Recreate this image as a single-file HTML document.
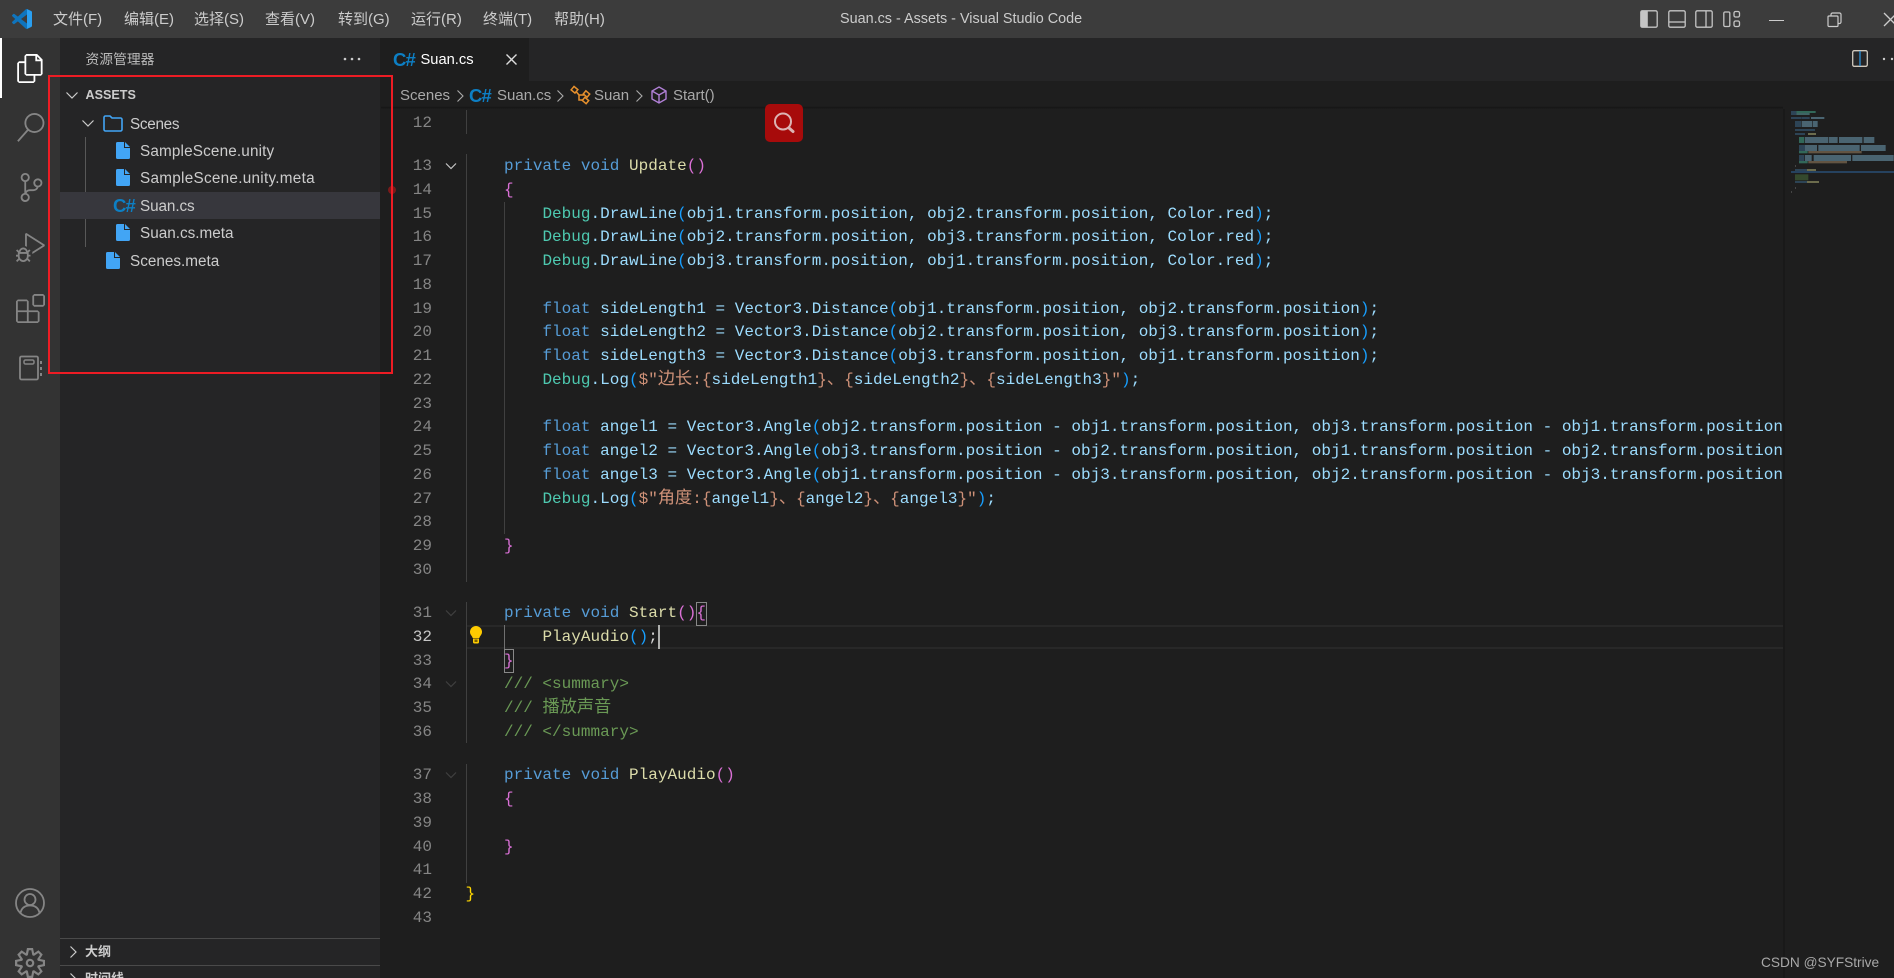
<!DOCTYPE html>
<html lang="zh-CN"><head><meta charset="utf-8"><title>Suan.cs - Assets - Visual Studio Code</title>
<style>
html,body{margin:0;padding:0;width:1894px;height:978px;overflow:hidden;background:#1e1e1e}
body{position:relative;font-family:"Liberation Sans","Noto Sans CJK SC",sans-serif;color:#ccc}
.a{position:absolute;white-space:pre}
svg{position:absolute;display:block;overflow:visible}
#code{position:absolute;left:0;top:0;width:1783px;height:978px;overflow:hidden;font-family:"Liberation Mono","Noto Sans CJK SC",monospace;font-size:16px;letter-spacing:.015px}
.l{position:absolute;left:465.5px;height:24px;line-height:24px;white-space:pre;color:#9cdcfe}
.n{position:absolute;left:390px;width:42px;height:24px;line-height:24px;text-align:right;color:#858585}
.c{font-size:17.2px;letter-spacing:0}
.k{color:#569cd6}.g{color:#4ec9b0}.f{color:#dcdcaa}.o{color:#ffd700}.p{color:#da70d6}.b{color:#179fff}.s{color:#ce9178}.m{color:#6a9955}.d{color:#d4d4d4}
.gd{position:absolute;width:1px;background:#404040}
.m1{top:9px;height:22px;line-height:22px;font-size:15px}
.t{font-size:15.3px;color:#ccc;height:24px;line-height:24px}
.cs{font-weight:bold;color:#0d7fc4;font-size:18.5px;line-height:24px;height:24px;letter-spacing:-.8px}
.bc{font-size:15px;color:#a9a9a9;top:84px;height:24px;line-height:24px}
</style></head><body>

<div class="a" style="left:0;top:0;width:1894px;height:38px;background:#3c3c3c"></div>
<div class="a" style="left:381px;top:38px;width:1513px;height:43px;background:#252526"></div>
<div class="a" style="left:381px;top:38px;width:148px;height:43px;background:#1e1e1e"></div>
<div class="a" style="left:381px;top:106px;width:1402px;height:3px;background:linear-gradient(#1e1e1e,#161616 60%,#1e1e1e)"></div>
<div class="a" style="left:1783px;top:109px;width:2px;height:869px;background:#191919"></div>

<div id="code">
<div class="a" style="left:466px;top:625px;width:1317px;height:2px;background:#282828"></div>
<div class="a" style="left:466px;top:647px;width:1317px;height:2px;background:#282828"></div>
<div class="gd" style="left:465.5px;top:110px;height:24px"></div>
<div class="gd" style="left:465.5px;top:154px;height:428px"></div>
<div class="gd" style="left:465.5px;top:602px;height:141px"></div>
<div class="gd" style="left:465.5px;top:764px;height:119px"></div>
<div class="gd" style="left:503.5px;top:202px;height:332px"></div>
<div class="gd" style="left:504px;top:625px;height:24px;background:#707070"></div>

<div class="n" style="top:111px">12</div>
<div class="n" style="top:154px">13</div>
<div class="n" style="top:178px">14</div>
<div class="n" style="top:201.5px">15</div>
<div class="n" style="top:225px">16</div>
<div class="n" style="top:249px">17</div>
<div class="n" style="top:273px">18</div>
<div class="n" style="top:296.5px">19</div>
<div class="n" style="top:320px">20</div>
<div class="n" style="top:344px">21</div>
<div class="n" style="top:368px">22</div>
<div class="n" style="top:392px">23</div>
<div class="n" style="top:415px">24</div>
<div class="n" style="top:439px">25</div>
<div class="n" style="top:463px">26</div>
<div class="n" style="top:487px">27</div>
<div class="n" style="top:510px">28</div>
<div class="n" style="top:534px">29</div>
<div class="n" style="top:558px">30</div>
<div class="n" style="top:601px">31</div>
<div class="n" style="top:625px;color:#c6c6c6">32</div>
<div class="n" style="top:649px">33</div>
<div class="n" style="top:672px">34</div>
<div class="n" style="top:696px">35</div>
<div class="n" style="top:720px">36</div>
<div class="n" style="top:763px">37</div>
<div class="n" style="top:787px">38</div>
<div class="n" style="top:811px">39</div>
<div class="n" style="top:835px">40</div>
<div class="n" style="top:858px">41</div>
<div class="n" style="top:882px">42</div>
<div class="n" style="top:906px">43</div>

<div class="l" style="top:154px">    <span class="k">private</span> <span class="k">void</span> <span class="f">Update</span><span class="p">()</span></div>
<div class="l" style="top:178px">    <span class="p">{</span></div>
<div class="l" style="top:201.5px">        <span class="g">Debug</span>.DrawLine<span class="b">(</span>obj1.transform.position, obj2.transform.position, Color.red<span class="b">)</span>;</div>
<div class="l" style="top:225px">        <span class="g">Debug</span>.DrawLine<span class="b">(</span>obj2.transform.position, obj3.transform.position, Color.red<span class="b">)</span>;</div>
<div class="l" style="top:249px">        <span class="g">Debug</span>.DrawLine<span class="b">(</span>obj3.transform.position, obj1.transform.position, Color.red<span class="b">)</span>;</div>
<div class="l" style="top:296.5px">        <span class="k">float</span> sideLength1 = Vector3.Distance<span class="b">(</span>obj1.transform.position, obj2.transform.position<span class="b">)</span>;</div>
<div class="l" style="top:320px">        <span class="k">float</span> sideLength2 = Vector3.Distance<span class="b">(</span>obj2.transform.position, obj3.transform.position<span class="b">)</span>;</div>
<div class="l" style="top:344px">        <span class="k">float</span> sideLength3 = Vector3.Distance<span class="b">(</span>obj3.transform.position, obj1.transform.position<span class="b">)</span>;</div>
<div class="l" style="top:368px">        <span class="g">Debug</span>.Log<span class="b">(</span><span class="s">$"<span class="c">边长</span>:{</span>sideLength1<span class="s">}<span class="c">、</span>{</span>sideLength2<span class="s">}<span class="c">、</span>{</span>sideLength3<span class="s">}"</span><span class="b">)</span>;</div>
<div class="l" style="top:415px">        <span class="k">float</span> angel1 = Vector3.Angle<span class="b">(</span>obj2.transform.position - obj1.transform.position, obj3.transform.position - obj1.transform.position<span class="b">)</span>;</div>
<div class="l" style="top:439px">        <span class="k">float</span> angel2 = Vector3.Angle<span class="b">(</span>obj3.transform.position - obj2.transform.position, obj1.transform.position - obj2.transform.position<span class="b">)</span>;</div>
<div class="l" style="top:463px">        <span class="k">float</span> angel3 = Vector3.Angle<span class="b">(</span>obj1.transform.position - obj3.transform.position, obj2.transform.position - obj3.transform.position<span class="b">)</span>;</div>
<div class="l" style="top:487px">        <span class="g">Debug</span>.Log<span class="b">(</span><span class="s">$"<span class="c">角度</span>:{</span>angel1<span class="s">}<span class="c">、</span>{</span>angel2<span class="s">}<span class="c">、</span>{</span>angel3<span class="s">}"</span><span class="b">)</span>;</div>
<div class="l" style="top:534px">    <span class="p">}</span></div>
<div class="l" style="top:601px">    <span class="k">private</span> <span class="k">void</span> <span class="f">Start</span><span class="p">(){</span></div>
<div class="l" style="top:625px">        <span class="f">PlayAudio</span><span class="b">()</span><span class="d">;</span></div>
<div class="l" style="top:649px">    <span class="p">}</span></div>
<div class="l m" style="top:672px;color:#6a9955">    /// &lt;summary&gt;</div>
<div class="l m" style="top:696px;color:#6a9955">    /// <span class="c">播放声音</span></div>
<div class="l m" style="top:720px;color:#6a9955">    /// &lt;/summary&gt;</div>
<div class="l" style="top:763px">    <span class="k">private</span> <span class="k">void</span> <span class="f">PlayAudio</span><span class="p">()</span></div>
<div class="l" style="top:787px">    <span class="p">{</span></div>
<div class="l" style="top:835px">    <span class="p">}</span></div>
<div class="l" style="top:882px"><span class="o">}</span></div>

<div class="a" style="left:696px;top:602px;width:9px;height:22px;border:1px solid #888"></div>
<div class="a" style="left:504px;top:649px;width:8px;height:22px;border:1px solid #888"></div>
<div class="a" style="left:658px;top:625px;width:2px;height:24px;background:#aeafad"></div>

<svg style="left:445px;top:160px" width="12" height="12" viewBox="0 0 12 12"><path d="M1 3.500l5 5 5-5" fill="none" stroke="#c5c5c5" stroke-width="1.200"/></svg>
<svg style="left:445px;top:607px" width="12" height="12" viewBox="0 0 12 12"><path d="M1 3.500l5 5 5-5" fill="none" stroke="#404040" stroke-width="1.200"/></svg>
<svg style="left:445px;top:678px" width="12" height="12" viewBox="0 0 12 12"><path d="M1 3.500l5 5 5-5" fill="none" stroke="#404040" stroke-width="1.200"/></svg>
<svg style="left:445px;top:769px" width="12" height="12" viewBox="0 0 12 12"><path d="M1 3.500l5 5 5-5" fill="none" stroke="#404040" stroke-width="1.200"/></svg>

<svg style="left:469px;top:625px" width="14" height="19" viewBox="0 0 14 19"><path d="M7 1a6 6 0 0 0-6 6c0 2.500 1.600 3.600 2.500 5.200V13h7v-.8C11.400 10.600 13 9.500 13 7a6 6 0 0 0-6-6z" fill="#fc0"/><path d="M4 13.500h6v3.500a1.500 1.500 0 0 1-1.500 1.500h-3A1.500 1.500 0 0 1 4 17z" fill="#fc0"/><rect x="5.500" y="14.500" width="3" height="2.500" fill="#7a6200"/></svg>

<div class="a" style="left:388px;top:186px;width:8px;height:8px;border-radius:50%;background:#7a1a1a"></div>

<div class="a" style="left:765px;top:104px;width:38px;height:38px;border-radius:5px;background:#a70b0b"></div>
<svg style="left:765px;top:104px" width="38" height="38" viewBox="0 0 38 38"><circle cx="18" cy="17.500" r="8" fill="none" stroke="#dcb4b4" stroke-width="2"/><path d="M24 24l4 3.500" stroke="#dcb4b4" stroke-width="3" stroke-linecap="round"/></svg>
</div>

<svg style="left:1783px;top:105px;opacity:.72" width="111" height="90" viewBox="0 0 333 270">
<g fill="#34536c"><rect x="24" y="18" width="16" height="12"/><rect x="24" y="36" width="30" height="6"/><rect x="55" y="36" width="25" height="6"/><rect x="36" y="48" width="18" height="18"/><rect x="36" y="72" width="60" height="6"/><rect x="36" y="84" width="30" height="6"/><rect x="48" y="120" width="18" height="18"/><rect x="48" y="150" width="16" height="18"/><rect x="36" y="192" width="36" height="6"/><rect x="36" y="228" width="36" height="6"/></g>
<g fill="#5b7f91"><rect x="84" y="36" width="40" height="6"/><rect x="56" y="48" width="32" height="18"/><rect x="90" y="48" width="14" height="18"/><rect x="66" y="96" width="70" height="18"/><rect x="138" y="96" width="26" height="18"/><rect x="168" y="96" width="70" height="18"/><rect x="242" y="96" width="32" height="18"/><rect x="66" y="120" width="36" height="18"/><rect x="106" y="120" width="124" height="18"/><rect x="234" y="120" width="74" height="18"/><rect x="66" y="150" width="20" height="18"/><rect x="92" y="150" width="112" height="18"/><rect x="208" y="150" width="124" height="18"/></g>
<g fill="#3a8570"><rect x="40" y="18" width="58" height="6"/><rect x="48" y="96" width="16" height="18"/><rect x="48" y="138" width="26" height="7"/><rect x="48" y="168" width="26" height="7"/></g>
<g fill="#7d6a52"><rect x="76" y="138" width="160" height="7"/><rect x="76" y="168" width="116" height="7"/></g>
<rect x="40" y="24" width="40" height="6" fill="#4d7f80"/>
<rect x="75" y="84" width="24" height="6" fill="#8a8a60"/><rect x="72" y="192" width="27" height="6" fill="#8a8a60"/><rect x="72" y="228" width="36" height="6" fill="#8a8a60"/>
<rect x="24" y="198" width="309" height="6" fill="#2a5078"/>
<rect x="36" y="208" width="40" height="18" fill="#3d5a33"/>
<rect x="36" y="180" width="3" height="6" fill="#555"/><rect x="36" y="246" width="3" height="6" fill="#555"/><rect x="24" y="258" width="3" height="6" fill="#555"/>
</svg>

<!-- Activity bar -->
<div class="a" style="left:0;top:38px;width:60px;height:940px;background:#333"></div>
<div class="a" style="left:0;top:38px;width:2px;height:60px;background:#fff"></div>
<svg style="left:16px;top:54px" width="29" height="29" viewBox="0 0 24 24"><path fill="#fff" d="M17.500 0h-9L7 1.500V6H2.500L1 7.500v15.070L2.500 24h12.070L16 22.570V18h4.700l1.300-1.430V4.500L17.500 0zm0 2.120l2.380 2.380H17.500V2.120zm-3 20.380h-12v-15H7v9.070L8.500 18h6v4.500zm6-6h-12v-15H16V6h4.500v10.500z"/></svg>
<svg style="left:16px;top:113px" width="29" height="29" viewBox="0 0 24 24"><path fill="#858585" d="M15.250 0a8.250 8.250 0 0 0-6.180 13.720L1 22.880l1.120 1 8.050-9.120A8.251 8.251 0 1 0 15.250.01V0zm0 15a6.750 6.750 0 1 1 0-13.500 6.750 6.750 0 0 1 0 13.500z"/></svg>
<svg style="left:17px;top:173px" width="29" height="29" viewBox="0 0 24 24"><path fill="#858585" d="M21.007 8.222A3.738 3.738 0 0 0 15.045 5.200a3.737 3.737 0 0 0 1.156 6.583 2.988 2.988 0 0 1-2.668 1.670h-2.990a4.456 4.456 0 0 0-2.989 1.165V7.400a3.737 3.737 0 1 0-1.494 0v9.117a3.776 3.776 0 1 0 1.816.099 2.990 2.990 0 0 1 2.668-1.667h2.990a4.484 4.484 0 0 0 4.223-3.039 3.736 3.736 0 0 0 3.250-3.687zM4.565 3.738a2.242 2.242 0 1 1 4.484 0 2.242 2.242 0 0 1-4.484 0zm4.484 16.441a2.242 2.242 0 1 1-4.484 0 2.242 2.242 0 0 1 4.484 0zm8.221-9.715a2.242 2.242 0 1 1 0-4.485 2.242 2.242 0 0 1 0 4.485z"/></svg>
<svg style="left:16px;top:233px" width="29" height="29" viewBox="0 0 24 24"><path fill="#858585" d="M10.940 13.500l-1.320 1.320a3.730 3.730 0 0 0-7.240 0L1.060 13.500 0 14.560l1.720 1.720-.22.220V18H0v1.500h1.500v.08c.077.489.214.966.41 1.420L0 22.940 1.060 24l1.650-1.650A4.308 4.308 0 0 0 6 24a4.310 4.310 0 0 0 3.290-1.650L10.940 24 12 22.940 10.090 21c.198-.464.336-.951.41-1.450v-.1H12V18h-1.500v-1.500l-.22-.22L12 14.560l-1.060-1.060zM6 13.500a2.250 2.250 0 0 1 2.250 2.250h-4.500A2.250 2.250 0 0 1 6 13.500zm3 6a3.330 3.330 0 0 1-3 3 3.330 3.330 0 0 1-3-3v-2.250h6v2.250zm14.760-9.900v1.260L13.500 17.370v-1.760l8.500-5.370L9 2v9.460a5.070 5.070 0 0 0-1.500-.72V.63L8.640 0l15.120 9.600z"/></svg>
<svg style="left:16px;top:294px" width="29" height="29" viewBox="0 0 24 24"><path fill="#858585" d="M13.500 1.500L15 0h7.500L24 1.500V9l-1.500 1.500H15L13.500 9V1.500zm1.500 0V9h7.500V1.500H15zM0 15V6l1.500-1.500H9L10.500 6v7.500H18l1.500 1.500v7.500L18 24H1.500L0 22.500V15zm9-1.500V6H1.500v7.500H9zM9 15H1.500v7.500H9V15zm1.500 7.500H18V15h-7.500v7.500z"/></svg>
<svg style="left:18px;top:355px" width="26" height="26" viewBox="0 0 26 26"><rect x="2" y="1.500" width="18" height="23" rx="1.500" fill="none" stroke="#858585" stroke-width="1.800"/><rect x="6" y="5" width="10" height="4" rx="1.500" fill="none" stroke="#858585" stroke-width="1.500"/><path d="M23 6v3M23 12v3M23 18v3" stroke="#858585" stroke-width="2"/></svg>
<svg style="left:15px;top:888px" width="30" height="30" viewBox="0 0 30 30"><circle cx="15" cy="15" r="14" fill="none" stroke="#858585" stroke-width="1.800"/><circle cx="15" cy="11.500" r="5.500" fill="none" stroke="#858585" stroke-width="1.800"/><path d="M5.500 25c1-5 4.500-7.500 9.500-7.500s8.500 2.500 9.500 7.500" fill="none" stroke="#858585" stroke-width="1.800"/></svg>
<svg style="left:15px;top:948px" width="30" height="30" viewBox="0 0 24 24"><path fill="#858585" d="M19.850 8.750l4.150.83v4.840l-4.150.83 2.350 3.520-3.430 3.430-3.520-2.350-.83 4.150H9.580l-.83-4.150-3.520 2.350-3.430-3.430 2.350-3.520L0 14.420V9.580l4.150-.83L1.800 5.230 5.230 1.800l3.520 2.350L9.580 0h4.840l.83 4.150 3.520-2.350 3.430 3.430-2.350 3.520zm-1.570 5.070l4-.81v-2l-4-.81-.54-1.300 2.290-3.430-1.430-1.430-3.430 2.290-1.300-.54-.81-4h-2l-.81 4-1.300.54-3.430-2.290-1.430 1.430L6.380 8.900l-.54 1.300-4 .81v2l4 .81.54 1.300-2.290 3.430 1.430 1.430 3.430-2.290 1.300.54.81 4h2l.81-4 1.300-.54 3.430 2.290 1.430-1.430-2.290-3.430.54-1.300zm-8.186-4.672A3.430 3.430 0 0 1 12 8.570 3.440 3.440 0 0 1 15.430 12a3.430 3.430 0 1 1-5.336-2.852zm.956 4.274c.281.188.612.288.95.288A1.700 1.700 0 0 0 13.710 12a1.710 1.710 0 1 0-2.660 1.422z"/></svg>

<!-- Sidebar -->
<div class="a" style="left:60px;top:38px;width:320px;height:940px;background:#252526"></div>
<div class="a" style="left:85.500px;top:48px;font-size:13.800px;line-height:24px;color:#bbb">资源管理器</div>
<svg style="left:343px;top:57px" width="18" height="4" viewBox="0 0 18 4"><g fill="#ccc"><circle cx="2" cy="2" r="1.300"/><circle cx="9" cy="2" r="1.300"/><circle cx="16" cy="2" r="1.300"/></g></svg>

<svg style="left:66px;top:89px" width="12" height="12" viewBox="0 0 12 12"><path d="M.5 3.500L6 9l5.500-5.500" fill="none" stroke="#ccc" stroke-width="1.200"/></svg>
<div class="a" style="left:85.500px;top:83px;font-size:12.600px;font-weight:bold;line-height:24px;color:#ccc">ASSETS</div>
<svg style="left:82px;top:117px" width="12" height="12" viewBox="0 0 12 12"><path d="M.5 3.500L6 9l5.500-5.500" fill="none" stroke="#ccc" stroke-width="1.200"/></svg>
<svg style="left:103px;top:115px" width="20" height="17" viewBox="0 0 20 17"><path d="M1 2.500A1.500 1.500 0 0 1 2.500 1H7l2 2h8.500A1.500 1.500 0 0 1 19 4.500v10a1.500 1.500 0 0 1-1.500 1.500h-15A1.500 1.500 0 0 1 1 14.500z" fill="none" stroke="#42a5f5" stroke-width="1.600"/></svg>
<div class="a t" style="left:130px;top:112.500px;letter-spacing:-.3px">Scenes</div>
<div class="a" style="left:85px;top:137px;width:1px;height:110px;background:#585858"></div>

<div class="a" style="left:60px;top:192px;width:320px;height:27px;background:#37373d"></div>

<svg style="left:116px;top:142px" width="14" height="17" viewBox="0 0 14 17"><path d="M1.500 0H9l5 5v10.500a1.500 1.500 0 0 1-1.500 1.500h-11A1.500 1.500 0 0 1 0 15.500v-14A1.500 1.500 0 0 1 1.500 0z" fill="#42a5f5"/><path d="M8.500 0v5.500H14" fill="none" stroke="#252526" stroke-width="1"/></svg>
<div class="a t" style="left:140px;top:140px;letter-spacing:.15px">SampleScene.unity</div>
<svg style="left:116px;top:169px" width="14" height="17" viewBox="0 0 14 17"><path d="M1.500 0H9l5 5v10.500a1.500 1.500 0 0 1-1.500 1.500h-11A1.500 1.500 0 0 1 0 15.500v-14A1.500 1.500 0 0 1 1.500 0z" fill="#42a5f5"/><path d="M8.500 0v5.500H14" fill="none" stroke="#252526" stroke-width="1"/></svg>
<div class="a t" style="left:140px;top:167px;letter-spacing:.27px">SampleScene.unity.meta</div>
<div class="a cs" style="left:113px;top:194px">C#</div>
<div class="a t" style="left:140px;top:195px;letter-spacing:-.1px">Suan.cs</div>
<svg style="left:116px;top:224px" width="14" height="17" viewBox="0 0 14 17"><path d="M1.500 0H9l5 5v10.500a1.500 1.500 0 0 1-1.500 1.500h-11A1.500 1.500 0 0 1 0 15.500v-14A1.500 1.500 0 0 1 1.500 0z" fill="#42a5f5"/><path d="M8.500 0v5.500H14" fill="none" stroke="#252526" stroke-width="1"/></svg>
<div class="a t" style="left:140px;top:222px">Suan.cs.meta</div>
<svg style="left:106px;top:252px" width="14" height="17" viewBox="0 0 14 17"><path d="M1.500 0H9l5 5v10.500a1.500 1.500 0 0 1-1.500 1.500h-11A1.500 1.500 0 0 1 0 15.500v-14A1.500 1.500 0 0 1 1.500 0z" fill="#42a5f5"/><path d="M8.500 0v5.500H14" fill="none" stroke="#252526" stroke-width="1"/></svg>
<div class="a t" style="left:130px;top:250px">Scenes.meta</div>

<div class="a" style="left:60px;top:938px;width:320px;height:1px;background:#4a4a4a"></div>
<svg style="left:67px;top:946px" width="12" height="12" viewBox="0 0 12 12"><path d="M3.500.5L9 6l-5.500 5.500" fill="none" stroke="#ccc" stroke-width="1.200"/></svg>
<div class="a" style="left:85px;top:940px;font-size:13px;font-weight:bold;line-height:24px;color:#ccc">大纲</div>
<div class="a" style="left:60px;top:965px;width:320px;height:1px;background:#4a4a4a"></div>
<svg style="left:67px;top:973px" width="12" height="12" viewBox="0 0 12 12"><path d="M3.500.5L9 6l-5.500 5.500" fill="none" stroke="#ccc" stroke-width="1.200"/></svg>
<div class="a" style="left:85px;top:967px;font-size:13px;font-weight:bold;line-height:24px;color:#ccc">时间线</div>

<!-- Title bar -->
<svg style="left:12px;top:9px" width="20" height="20" viewBox="0 0 24 24"><path fill="#0f74bd" d="M23.150 2.587L18.210.21a1.494 1.494 0 0 0-1.705.29l-9.460 8.630-4.120-3.128a.999.999 0 0 0-1.276.057L.327 7.261A1 1 0 0 0 .326 8.740L3.899 12 .326 15.260a1 1 0 0 0 .001 1.479L1.650 17.940a.999.999 0 0 0 1.276.057l4.120-3.128 9.460 8.630a1.492 1.492 0 0 0 1.704.29l4.942-2.377A1.500 1.500 0 0 0 24 20.060V3.939a1.500 1.500 0 0 0-.85-1.352zm-5.146 14.861L10.826 12l7.178-5.448v10.896z"/><path fill="#2a9ff0" d="M18 .1l5.150 2.487A1.500 1.500 0 0 1 24 3.939v16.121a1.500 1.500 0 0 1-.85 1.352L18 23.900z"/></svg>
<div class="a m1" style="left:53px">文件(F)</div>
<div class="a m1" style="left:124px">编辑(E)</div>
<div class="a m1" style="left:194px">选择(S)</div>
<div class="a m1" style="left:265px">查看(V)</div>
<div class="a m1" style="left:338px">转到(G)</div>
<div class="a m1" style="left:411px">运行(R)</div>
<div class="a m1" style="left:483px">终端(T)</div>
<div class="a m1" style="left:554px">帮助(H)</div>
<div class="a" style="left:840px;top:8px;font-size:14.400px;line-height:22px;color:#ccc">Suan.cs - Assets - Visual Studio Code</div>

<svg style="left:1640px;top:10px" width="18" height="18" viewBox="0 0 18 18"><rect x=".8" y=".8" width="16.400" height="16.400" rx="1.500" fill="none" stroke="#c5c5c5" stroke-width="1.300"/><rect x=".8" y=".8" width="7" height="16.400" fill="#c5c5c5"/></svg>
<svg style="left:1668px;top:10px" width="18" height="18" viewBox="0 0 18 18"><rect x=".8" y=".8" width="16.400" height="16.400" rx="1.500" fill="none" stroke="#c5c5c5" stroke-width="1.300"/><path d="M1 12h16" stroke="#c5c5c5" stroke-width="1.300"/></svg>
<svg style="left:1695px;top:10px" width="18" height="18" viewBox="0 0 18 18"><rect x=".8" y=".8" width="16.400" height="16.400" rx="1.500" fill="none" stroke="#c5c5c5" stroke-width="1.300"/><path d="M11 1v16" stroke="#c5c5c5" stroke-width="1.300"/></svg>
<svg style="left:1723px;top:10px" width="18" height="18" viewBox="0 0 18 18"><g fill="none" stroke="#c5c5c5" stroke-width="1.300"><rect x=".8" y="2" width="6" height="14.500" rx="1.200"/><rect x="11" y="1.500" width="5.500" height="5.500" rx="1.500"/><rect x="11" y="11" width="5.500" height="5.500" rx="1.500"/></g></svg>
<div class="a" style="left:1769px;top:19.500px;width:15px;height:1px;background:#ccc"></div>
<svg style="left:1827px;top:12px" width="16" height="16" viewBox="0 0 16 16"><g fill="none" stroke="#ccc" stroke-width="1.200"><rect x="1" y="4" width="10" height="10.500" rx="1"/><path d="M4 4V2.500A1.500 1.500 0 0 1 5.500 1h7A1.500 1.500 0 0 1 14 2.500v7.500a1.500 1.500 0 0 1-1.500 1.500H11"/></g></svg>
<svg style="left:1884px;top:13px" width="14" height="14" viewBox="0 0 14 14"><path d="M0 0l13 13M13 0L0 13" stroke="#ccc" stroke-width="1.300"/></svg>

<!-- Tab -->
<div class="a cs" style="left:393px;top:48px">C#</div>
<div class="a" style="left:420.500px;top:48px;font-size:14.700px;line-height:24px;color:#fff">Suan.cs</div>
<svg style="left:506px;top:54px" width="11" height="11" viewBox="0 0 11 11"><path d="M.5.500l10 10M10.500.500l-10 10" stroke="#ddd" stroke-width="1.400"/></svg>
<svg style="left:1852px;top:50px" width="16" height="17" viewBox="0 0 16 17"><rect x=".7" y=".7" width="14.600" height="15.600" rx="1.500" fill="none" stroke="#cfc8bd" stroke-width="1.300"/><path d="M8 1v15" stroke="#2a8fd8" stroke-width="1.300"/></svg>
<svg style="left:1882px;top:57px" width="14" height="4" viewBox="0 0 14 4"><circle cx="2" cy="2" r="1.200" fill="#ccc"/><circle cx="10" cy="2" r="1.200" fill="#ccc"/></svg>

<!-- Breadcrumb -->
<div class="a bc" style="left:400px">Scenes</div>
<svg style="left:456px;top:89.500px" width="8" height="12" viewBox="0 0 8 12"><path d="M1.500.500L7 6l-5.500 5.500" fill="none" stroke="#a9a9a9" stroke-width="1.100"/></svg>
<div class="a cs" style="left:469px;top:84px">C#</div>
<div class="a bc" style="left:497px">Suan.cs</div>
<svg style="left:556px;top:89.500px" width="8" height="12" viewBox="0 0 8 12"><path d="M1.500.500L7 6l-5.500 5.500" fill="none" stroke="#a9a9a9" stroke-width="1.100"/></svg>
<svg style="left:571px;top:86px" width="19" height="18" viewBox="0 0 19 18"><g fill="none" stroke="#e8912d" stroke-width="1.500"><rect x="1" y="1.500" width="5" height="4.500" transform="rotate(40 3.500 3.750)"/><rect x="13" y="6" width="5" height="4" transform="rotate(40 15.500 8)"/><rect x="12" y="12.500" width="5" height="4" transform="rotate(40 14.500 14.500)"/><path d="M5.500 6L8 9h5M8 9v5h4"/></g></svg>
<div class="a bc" style="left:594px">Suan</div>
<svg style="left:635px;top:89.500px" width="8" height="12" viewBox="0 0 8 12"><path d="M1.500.500L7 6l-5.500 5.500" fill="none" stroke="#a9a9a9" stroke-width="1.100"/></svg>
<svg style="left:651px;top:86px" width="16" height="18" viewBox="0 0 16 18"><path d="M8 1l7 4v8l-7 4-7-4V5zM1 5l7 4 7-4M8 9v8" fill="none" stroke="#b180d7" stroke-width="1.400"/></svg>
<div class="a bc" style="left:673px">Start()</div>

<!-- Red annotation box -->
<div class="a" style="left:48px;top:75px;width:341px;height:295px;border:2px solid #ed1c24;box-sizing:content-box"></div>

<div class="a" style="left:1761px;top:952px;font-size:13.700px;line-height:22px;color:#a8a8a8">CSDN @SYFStrive</div>
</body></html>
